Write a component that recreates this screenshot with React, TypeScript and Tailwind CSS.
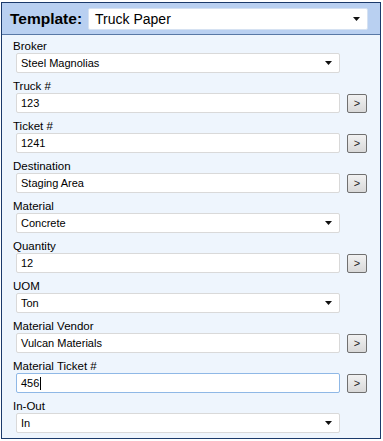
const fields: { label: string; value: string; kind: 'select' | 'input'; focused?: boolean }[] = [
    { label: 'Broker', value: 'Steel Magnolias', kind: 'select' },
    { label: 'Truck #', value: '123', kind: 'input' },
    { label: 'Ticket #', value: '1241', kind: 'input' },
    { label: 'Destination', value: 'Staging Area', kind: 'input' },
    { label: 'Material', value: 'Concrete', kind: 'select' },
    { label: 'Quantity', value: '12', kind: 'input' },
    { label: 'UOM', value: 'Ton', kind: 'select' },
    { label: 'Material Vendor', value: 'Vulcan Materials', kind: 'input' },
    { label: 'Material Ticket #', value: '456', kind: 'input', focused: true },
    { label: 'In-Out', value: 'In', kind: 'select' },
];

function Caret() {
    return (
        <svg width="7" height="4" viewBox="0 0 7 4" className="shrink-0">
            <path d="M0 0 H7 L3.5 4 Z" fill="#111" />
        </svg>
    );
}

export default function App() {
    return (
        <div className="bg-white w-[383px] h-[441px] pt-[2px] pl-[1px] font-['Liberation_Sans',Arial,sans-serif] text-black">
            <div className="w-[380px] h-[437px] border border-[#1b3a6b] bg-[#eef5fd] flex flex-col">
                {/* Header */}
                <div className="h-[32px] bg-[#b9d0f1] border-b border-[#5878a6] flex items-center pl-[8px] pr-[12px] gap-[6px]">
                    <span className="font-bold text-[15.5px] leading-none">Template:</span>
                    <div className="flex-1 h-[22px] bg-white border border-[#d6e2f2] rounded-[2px] flex items-center pl-[6px] pr-[7px]">
                        <span className="flex-1 text-[14px] leading-none">Truck Paper</span>
                        <Caret />
                    </div>
                </div>

                {/* Fields */}
                <div className="flex flex-col pt-[4px] pl-[11px] gap-[6px]">
                    {fields.map((f) => (
                        <div key={f.label} className="flex flex-col">
                            <span className="text-[11.5px] leading-[14px] h-[14px]">{f.label}</span>
                            <div className="flex items-center pl-[3px]">
                                <div
                                    className={
                                        f.focused
                                            ? 'w-[324px] h-[20px] bg-white border border-[#8fb8e6] rounded-[2px] flex items-center pl-[4px] pr-[7px]'
                                            : 'w-[324px] h-[20px] bg-white border border-[#d9d9d9] rounded-[2px] flex items-center pl-[4px] pr-[7px]'
                                    }
                                >
                                    <span className="flex-1 text-[11px] leading-none flex items-center">
                                        {f.value}
                                        {f.focused && <span className="inline-block w-px h-[13px] bg-black ml-px" />}
                                    </span>
                                    {f.kind === 'select' && <Caret />}
                                </div>
                                {f.kind === 'input' && (
                                    <button className="ml-[7px] w-[20px] h-[19px] rounded-[2px] border border-[#707070] bg-gradient-to-b from-[#f2f2f2] to-[#d8d8d8] flex items-center justify-center text-[11px] leading-none text-[#222]">
                                        &gt;
                                    </button>
                                )}
                            </div>
                        </div>
                    ))}
                </div>
            </div>
        </div>
    );
}
